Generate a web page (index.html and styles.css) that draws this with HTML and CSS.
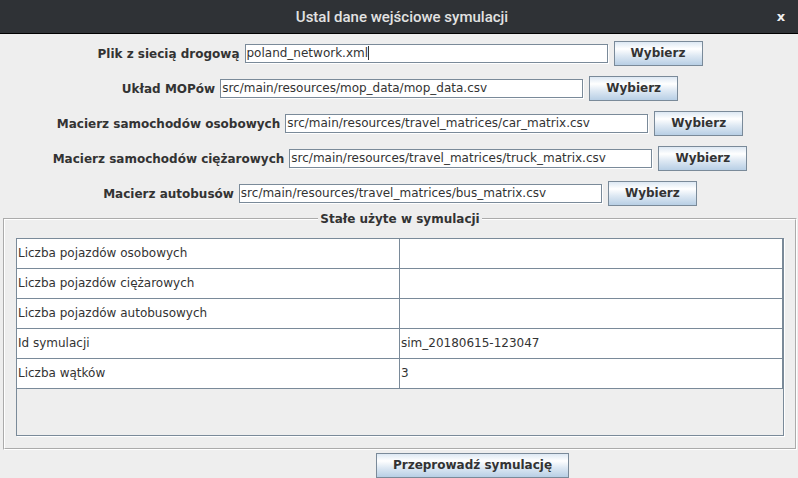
FILE: index.html
```html
<!DOCTYPE html>
<html lang="pl">
<head>
<meta charset="utf-8">
<title>Ustal dane wejściowe symulacji</title>
<link rel="stylesheet" href="styles.css">
</head>
<body>
<div class="window">
  <header class="titlebar">
    <span class="title-spacer"></span>
    <span class="title">Ustal dane wejściowe symulacji</span>
    <span class="close">x</span>
  </header>
  <div class="form">
    <div class="row">
      <span class="label">Plik z siecią drogową</span>
      <span class="field">poland_network.xml<span class="caret"></span></span>
      <span class="button">Wybierz</span>
    </div>
    <div class="row">
      <span class="label">Układ MOPów</span>
      <span class="field">src/main/resources/mop_data/mop_data.csv</span>
      <span class="button">Wybierz</span>
    </div>
    <div class="row">
      <span class="label">Macierz samochodów osobowych</span>
      <span class="field">src/main/resources/travel_matrices/car_matrix.csv</span>
      <span class="button">Wybierz</span>
    </div>
    <div class="row">
      <span class="label">Macierz samochodów ciężarowych</span>
      <span class="field">src/main/resources/travel_matrices/truck_matrix.csv</span>
      <span class="button">Wybierz</span>
    </div>
    <div class="row">
      <span class="label">Macierz autobusów</span>
      <span class="field">src/main/resources/travel_matrices/bus_matrix.csv</span>
      <span class="button">Wybierz</span>
    </div>
  </div>
  <fieldset class="group">
    <legend class="group-title">Stałe użyte w symulacji</legend>
    <div class="scroll">
      <div class="grid">
        <div class="cell">Liczba pojazdów osobowych</div><div class="cell"></div>
        <div class="cell">Liczba pojazdów ciężarowych</div><div class="cell"></div>
        <div class="cell">Liczba pojazdów autobusowych</div><div class="cell"></div>
        <div class="cell">Id symulacji</div><div class="cell">sim_20180615-123047</div>
        <div class="cell">Liczba wątków</div><div class="cell">3</div>
      </div>
    </div>
  </fieldset>
  <div class="bottom">
    <span class="button wide">Przeprowadź symulację</span>
  </div>
</div>
</body>
</html>
```

FILE: styles.css
```css
html, body {
  margin: 0;
  padding: 0;
}
body {
  background: #eeeeee;
  font-family: "DejaVu Sans", sans-serif;
  font-size: 12px;
  color: #333333;
}
.window {
  width: 798px;
  height: 478px;
  overflow: hidden;
  background: #eeeeee;
}
.titlebar {
  height: 33px;
  border-bottom: 1px solid #000000;
  background: #2f3236;
  display: flex;
  align-items: center;
  justify-content: space-between;
  color: #e2e2e2;
}
.title-spacer {
  width: 34px;
}
.title {
  font-family: Roboto, "Liberation Sans", sans-serif;
  font-size: 15px;
  font-weight: 500;
  margin-left: 6px;
}
.close {
  width: 34px;
  text-align: center;
  font-family: "DejaVu Sans", sans-serif;
  font-weight: bold;
  font-size: 13px;
  color: #f0f0f0;
}
.form {
  padding-top: 7px;
  display: flex;
  flex-direction: column;
  gap: 10px;
}
.row {
  height: 25px;
  display: flex;
  justify-content: center;
  align-items: center;
  gap: 5px;
  padding-left: 2px;
}
.label {
  font-weight: bold;
  white-space: nowrap;
}
.field {
  box-sizing: border-box;
  width: 363px;
  height: 19px;
  margin-right: 1px;
  border: 1px solid #7a8a99;
  box-shadow: 1px 1px 0 #ffffff;
  background: #ffffff;
  padding-left: 1px;
  line-height: 17px;
  white-space: nowrap;
  overflow: hidden;
  color: #333333;
}
.caret {
  display: inline-block;
  width: 1px;
  height: 14px;
  background: #333333;
  vertical-align: -3px;
}
.button {
  box-sizing: border-box;
  width: 89px;
  height: 25px;
  border: 1px solid #7a8a99;
  background: linear-gradient(to bottom, #dde8f3 0%, #ffffff 30%, #dde8f3 60%, #b8cfe5 100%);
  font-weight: bold;
  text-align: center;
  line-height: 23px;
  white-space: nowrap;
}
.button.wide {
  width: 193px;
}
.group {
  margin: 5px 1px 0 3px;
  border: 2px groove #ffffff;
  padding: 11px 11px 12px 11px;
  min-width: 0;
}
.group-title {
  margin: 0 auto;
  padding: 0 2px;
  font-weight: bold;
  line-height: 16px;
}
.scroll {
  height: 196px;
  border: 1px solid #7a8a99;
  box-shadow: 1px 1px 0 #ffffff;
  background: #eeeeee;
}
.grid {
  display: grid;
  grid-template-columns: 383px 383px;
}
.cell {
  box-sizing: border-box;
  height: 30px;
  border-right: 1px solid #7a8a99;
  border-bottom: 1px solid #7a8a99;
  background: #ffffff;
  padding-left: 1px;
  line-height: 29px;
  white-space: nowrap;
}
.bottom {
  display: flex;
  padding-left: 376px;
  margin-top: 3px;
}
```
